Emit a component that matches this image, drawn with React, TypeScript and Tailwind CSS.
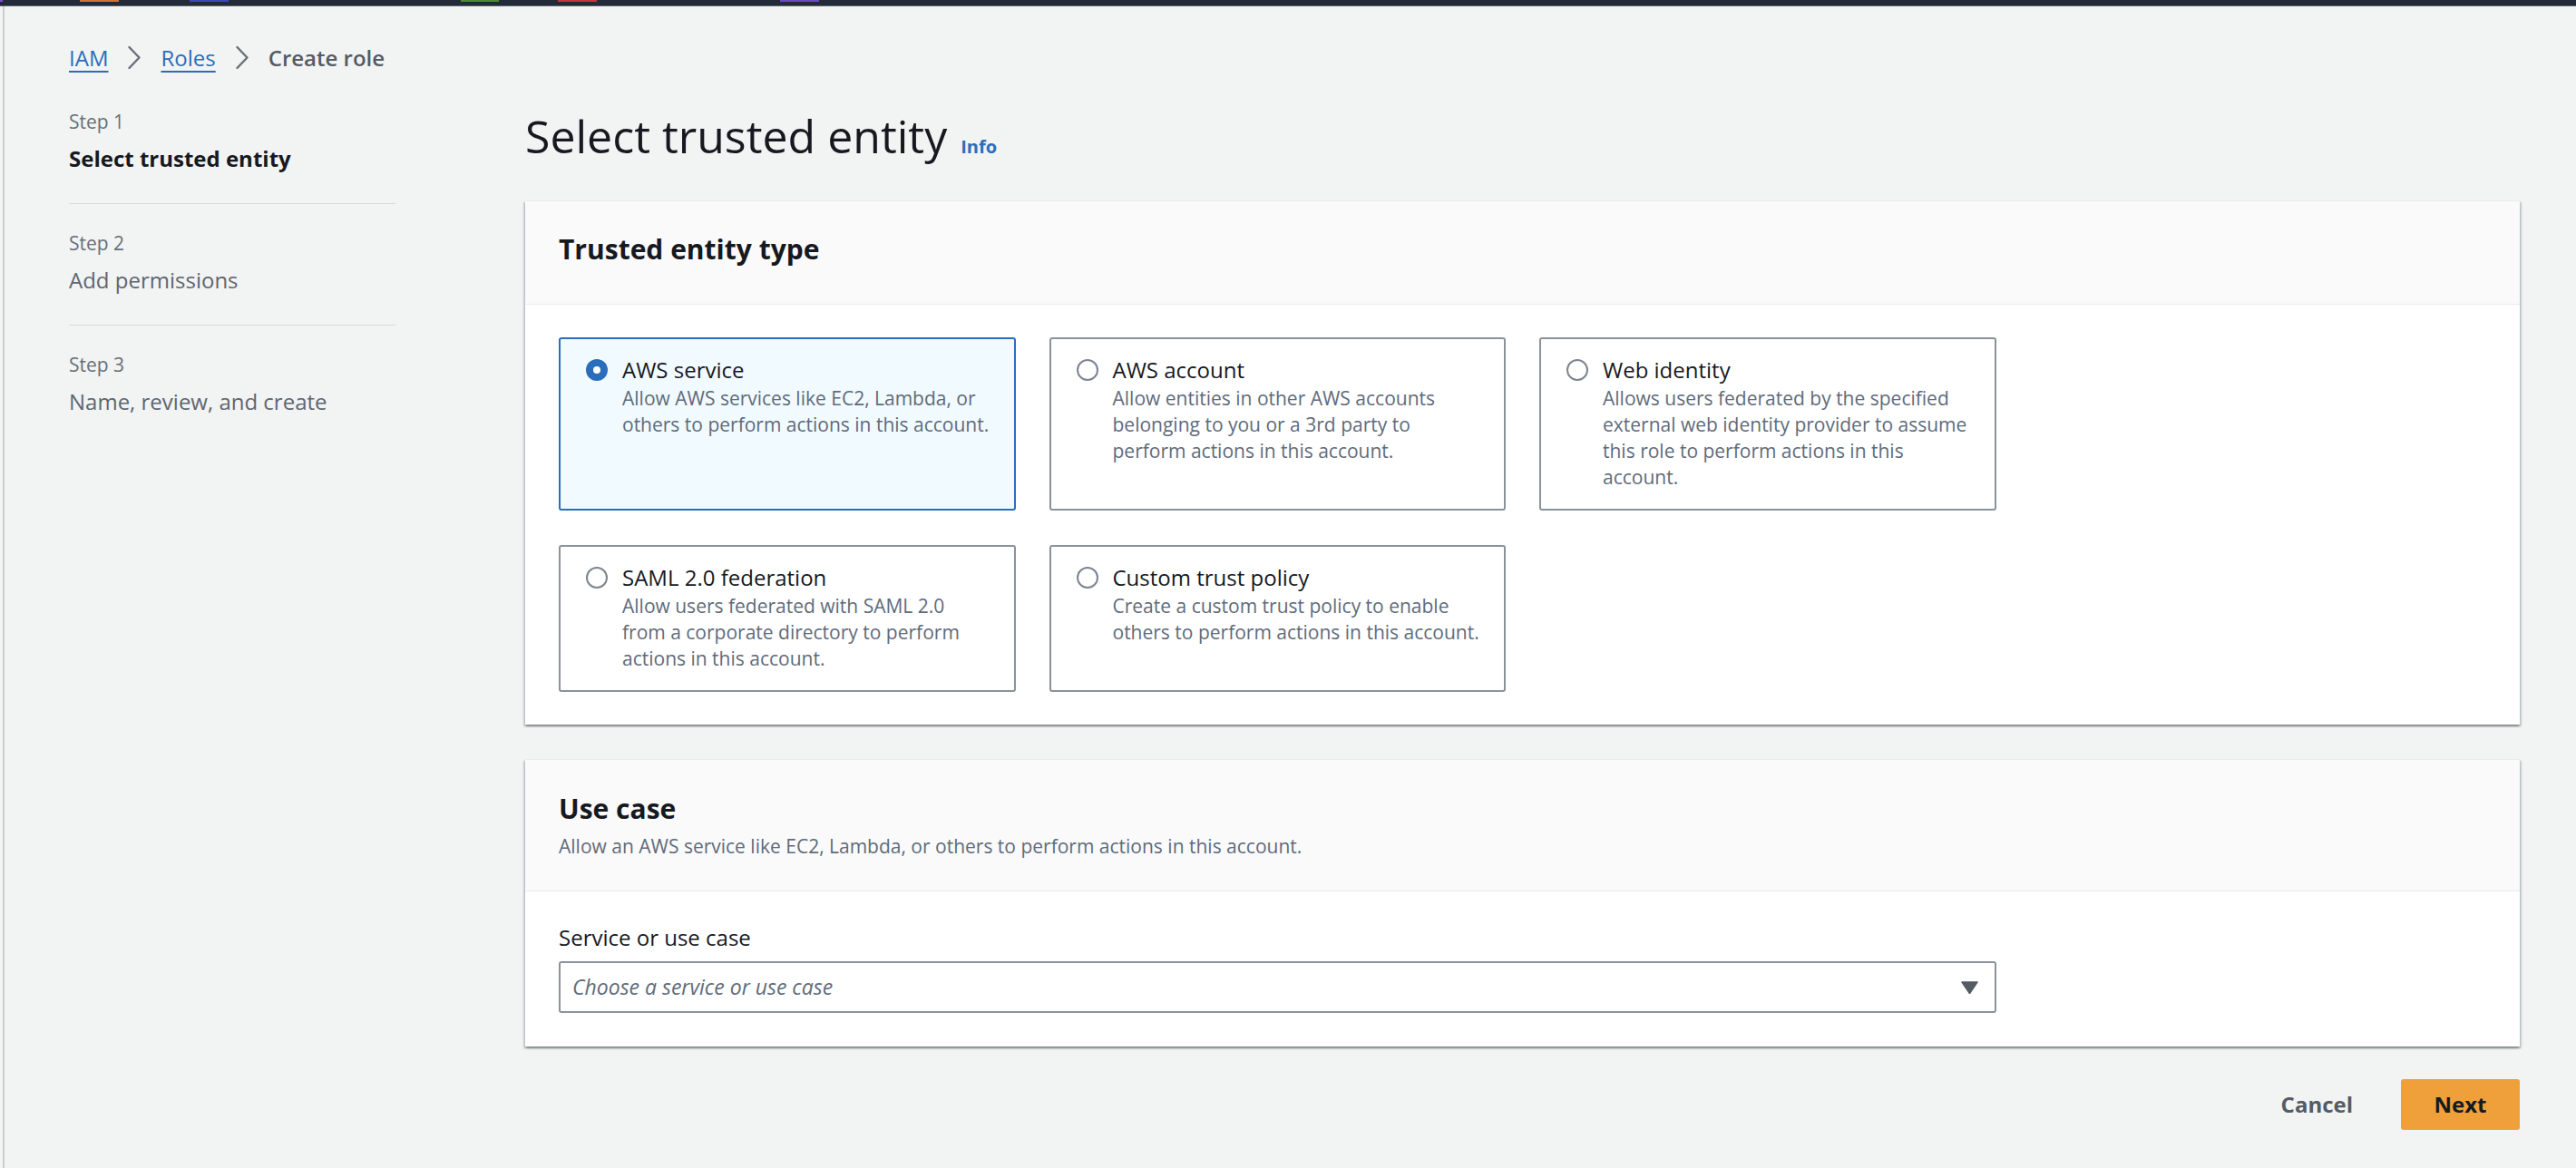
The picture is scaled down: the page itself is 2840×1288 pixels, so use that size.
import clsx from 'clsx'

type Tile = {
  title: string
  lines: string[]
  selected?: boolean
  newRow?: boolean
}

const tiles: Tile[] = [
  {
    title: 'AWS service',
    lines: ['Allow AWS services like EC2, Lambda, or', 'others to perform actions in this account.'],
    selected: true,
  },
  {
    title: 'AWS account',
    lines: ['Allow entities in other AWS accounts', 'belonging to you or a 3rd party to', 'perform actions in this account.'],
  },
  {
    title: 'Web identity',
    lines: [
      'Allows users federated by the specified',
      'external web identity provider to assume',
      'this role to perform actions in this',
      'account.',
    ],
  },
  {
    title: 'SAML 2.0 federation',
    lines: ['Allow users federated with SAML 2.0', 'from a corporate directory to perform', 'actions in this account.'],
    newRow: true,
  },
  {
    title: 'Custom trust policy',
    lines: ['Create a custom trust policy to enable', 'others to perform actions in this account.'],
  },
]

const steps = [
  { label: 'Step 1', title: 'Select trusted entity', active: true },
  { label: 'Step 2', title: 'Add permissions' },
  { label: 'Step 3', title: 'Name, review, and create' },
]

function Chevron() {
  return (
    <svg width="16" height="27" viewBox="0 0 16 27" fill="none" className="mx-[21px] shrink-0">
      <path d="M2.5 2L13.5 13.5L2.5 25" stroke="#687078" strokeWidth="2.4" strokeLinecap="round" strokeLinejoin="round" />
    </svg>
  )
}

function Radio({ checked }: { checked?: boolean }) {
  if (checked) {
    return (
      <span className="flex h-[24px] w-[24px] items-center justify-center rounded-full bg-[#2a6ebb]">
        <span className="h-[8px] w-[8px] rounded-full bg-white" />
      </span>
    )
  }
  return <span className="h-[24px] w-[24px] rounded-full border-2 border-[#7d8590] bg-white" />
}

function TileCard({ tile }: { tile: Tile }) {
  return (
    <div
      className={clsx(
        'flex gap-[16px] rounded-[3px] border-2 pb-[20px] pl-[28px] pr-[16px] pt-[17px]',
        tile.selected ? 'border-[#2a6ebb] bg-[#f1faff]' : 'border-[#8a929c] bg-white',
        tile.newRow && 'col-start-1',
      )}
    >
      <div className="flex h-[34px] shrink-0 items-center">
        <Radio checked={tile.selected} />
      </div>
      <div className="min-w-0">
        <div className="text-[24px] leading-[34px] text-[#16191f]">{tile.title}</div>
        {tile.lines.map((line) => (
          <div key={line} className="whitespace-nowrap text-[21px] leading-[29px] text-[#5f6b7a]">
            {line}
          </div>
        ))}
      </div>
    </div>
  )
}

const panelShadow =
  'shadow-[0_2px_2px_0_rgba(0,28,36,0.3),2px_2px_2px_0_rgba(0,28,36,0.15),-2px_2px_2px_0_rgba(0,28,36,0.15)]'

export default function App() {
  return (
    <div className="flex min-h-screen flex-col bg-[#f2f3f3] font-['Open_Sans',sans-serif]">
      {/* browser tab strip */}
      <div className="flex h-[6px] items-start bg-[#232b39]">
        <span className="h-[2px] w-[3px] bg-[#7b4fd6]" />
        <span className="ml-[85px] h-[2px] w-[43px] bg-[#d3722f]" />
        <span className="ml-[78px] h-[2px] w-[43px] bg-[#3d46c2]" />
        <span className="ml-[256px] h-[2px] w-[42px] bg-[#4a8a30]" />
        <span className="ml-[65px] h-[2px] w-[43px] bg-[#c7333a]" />
        <span className="ml-[202px] h-[2px] w-[43px] bg-[#6a46c9]" />
      </div>
      <div className="h-px bg-[#5b6470]" />

      <div className="ml-[3px] flex-1 border-l-2 border-[#c9cdcd] pb-[40px] pl-[71px] pr-[62px] pt-[39px]">
        <nav className="flex h-[35px] items-center text-[24px] leading-[35px]">
          <a className="text-[#2a6ebb] underline decoration-[2px] underline-offset-[5px]">IAM</a>
          <Chevron />
          <a className="text-[#2a6ebb] underline decoration-[2px] underline-offset-[5px]">Roles</a>
          <Chevron />
          <span className="font-semibold text-[#545b64]">Create role</span>
        </nav>

        <div className="mt-[39px] flex">
          <aside className="w-[360px] shrink-0">
            {steps.map((step, i) => (
              <div
                key={step.label}
                className={clsx(i > 0 && 'pt-[29px]', i < steps.length - 1 && 'border-b border-[#d5dbdb] pb-[32px]')}
              >
                <div className="text-[21px] leading-[29px] text-[#687078]">{step.label}</div>
                <div
                  className={clsx(
                    'mt-[9px] text-[24px] leading-[34px]',
                    step.active ? 'font-bold text-[#16191f]' : 'text-[#5f6670]',
                  )}
                >
                  {step.title}
                </div>
              </div>
            ))}
          </aside>

          <main className="ml-[143px] min-w-0 flex-1">
            <div className="flex items-baseline gap-[15px]">
              <h1 className="text-[50px] leading-[60px] text-[#16191f]">Select trusted entity</h1>
              <a className="text-[20px] font-bold text-[#2a6ebb]">Info</a>
            </div>

            <section className={clsx('mt-[41px] border-t border-[#eaeded] bg-white', panelShadow)}>
              <div className="border-b border-[#eaeded] bg-[#fafafa] px-[37px] pb-[40px] pt-[33px]">
                <h2 className="text-[30px] font-bold leading-[40px] text-[#16191f]">Trusted entity type</h2>
              </div>
              <div className="grid grid-cols-4 gap-x-[37px] gap-y-[38px] px-[37px] py-[36px]">
                {tiles.map((tile) => (
                  <TileCard key={tile.title} tile={tile} />
                ))}
              </div>
            </section>

            <section className={clsx('mt-[38px] border-t border-[#eaeded] bg-white', panelShadow)}>
              <div className="border-b border-[#eaeded] bg-[#fafafa] px-[37px] pb-[34px] pt-[34px]">
                <h2 className="text-[30px] font-bold leading-[40px] text-[#16191f]">Use case</h2>
                <p className="mt-[7px] text-[21px] leading-[29px] text-[#5f6b7a]">
                  Allow an AWS service like EC2, Lambda, or others to perform actions in this account.
                </p>
              </div>
              <div className="px-[37px] pb-[37px] pt-[35px]">
                <label className="block text-[24px] leading-[32px] text-[#16191f]">Service or use case</label>
                <div className="mt-[10px] grid grid-cols-4 gap-x-[37px]">
                  <div className="col-span-3 flex h-[57px] items-center justify-between rounded-[3px] border-2 border-[#8a929c] bg-white pl-[13px] pr-[18px]">
                    <span className="text-[23px] italic text-[#5f6b7a]">Choose a service or use case</span>
                    <svg width="19" height="14" viewBox="0 0 19 14">
                      <path d="M1 1H18L9.5 13.5Z" fill="#545b64" stroke="#545b64" strokeWidth="1.5" strokeLinejoin="round" />
                    </svg>
                  </div>
                </div>
              </div>
            </section>

            <div className="mt-[36px] flex items-center justify-end gap-[53px]">
              <button className="text-[24px] font-bold text-[#545b64]">Cancel</button>
              <button className="h-[56px] w-[131px] rounded-[3px] bg-[#f0a03a] text-[24px] font-bold text-[#16191f]">
                Next
              </button>
            </div>
          </main>
        </div>
      </div>
    </div>
  )
}
